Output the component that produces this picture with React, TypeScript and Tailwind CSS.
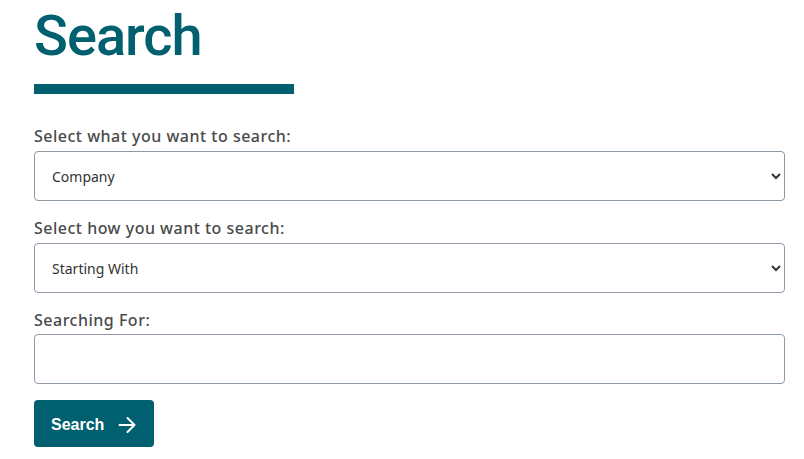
import React from "react";

export default function App() {
  return (
    <div className="min-h-[459px] bg-white pl-[34px] pt-[8px]">
      <div className="w-[751px]">
        <h1 className="text-[56px] leading-[56px] font-medium text-[#00606f] tracking-[-1px]" style={{ fontFamily: 'Roboto, "Noto Sans", sans-serif' }}>
          Search
        </h1>
        <div className="mt-[20px] h-[10px] w-[260px] bg-[#00606f]" />
        <form className="mt-[31px] flex flex-col" style={{ fontFamily: '"Noto Sans", sans-serif' }}>
          <label className="text-[16px] leading-[22px] font-medium tracking-[0.5px] text-[#4a4a4a]">Select what you want to search:</label>
          <select className="mt-[4px] h-[50px] w-full rounded-[4px] border border-[#8d9aa6] bg-white pl-[13px] pr-[8px] text-[14px] text-[#333]">
            <option>Company</option>
          </select>
          <label className="mt-[16px] text-[16px] leading-[22px] font-medium tracking-[0.5px] text-[#4a4a4a]">Select how you want to search:</label>
          <select className="mt-[4px] h-[50px] w-full rounded-[4px] border border-[#8d9aa6] bg-white pl-[13px] pr-[8px] text-[14px] text-[#333]">
            <option>Starting With</option>
          </select>
          <label className="mt-[16px] text-[16px] leading-[22px] font-medium tracking-[0.5px] text-[#4a4a4a]">Searching For:</label>
          <input className="mt-[3px] h-[50px] w-full rounded-[4px] border border-[#8d9aa6] bg-white px-[16px] text-[14px]" />
          <div className="mt-[16px]">
            <button type="button" className="flex h-[47px] w-[120px] items-center gap-[14px] rounded-[4px] bg-[#00606f] pl-[17px] pt-[2px] text-[16px] font-bold text-white" style={{ fontFamily: '"Liberation Sans", Arial, sans-serif' }}>
              Search
              <svg width="18" height="18" viewBox="0 0 18 18" fill="none" stroke="white" strokeWidth="2" strokeLinecap="round" strokeLinejoin="round">
                <path d="M1.5 9h15M9.5 2l7 7-7 7" />
              </svg>
            </button>
          </div>
        </form>
      </div>
    </div>
  );
}
